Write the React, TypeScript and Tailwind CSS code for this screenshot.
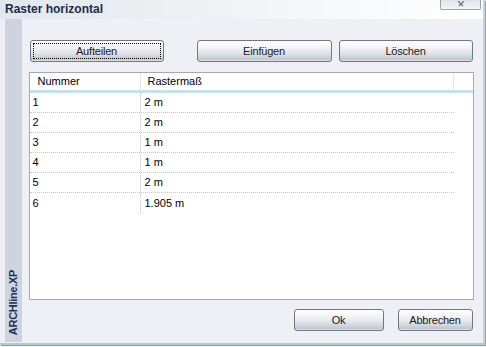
import type { ReactNode } from "react";

const rows = [
  { nr: "1", val: "2 m" },
  { nr: "2", val: "2 m" },
  { nr: "3", val: "1 m" },
  { nr: "4", val: "1 m" },
  { nr: "5", val: "2 m" },
  { nr: "6", val: "1.905 m" },
];

function XpButton({ children, className = "", focused = false }: { children: ReactNode; className?: string; focused?: boolean }) {
  return (
    <button
      className={
        "relative h-[22px] rounded-[3px] border border-[#6f7886] bg-[linear-gradient(to_bottom,#ffffff_0%,#f1f2f4_35%,#d9dde2_70%,#c2c7cf_92%,#e4e6ea_100%)] text-[11px] tracking-[-0.2px] text-[#1a1a1a] " +
        className
      }
    >
      {focused && <span className="absolute inset-[2px] border border-dotted border-black" />}
      {children}
    </button>
  );
}

export default function App() {
  return (
    <div className="h-[347px] w-[486px] overflow-hidden bg-white font-['Liberation_Sans',Arial,sans-serif]">
      <div className="flex h-[345px] w-[485px] flex-col border-b-2 border-r-2 border-b-[#a9cfc9] border-r-[#c9d3d6] bg-[#eef0f5] shadow-[1px_1px_1px_#9aa0a6]">
        {/* title bar */}
        <div className="flex h-[19px] items-start justify-between bg-[linear-gradient(to_right,#e1e7ec,#f4f6f8_60%,#ffffff)] pl-[5px] pr-[2px]">
          <span className="pt-[2px] text-[12px] font-bold leading-[14px] text-[#1c2b4a]">Raster horizontal</span>
          <div className="flex h-[10px] w-[41px] items-end justify-center rounded-b-[2px] border border-t-0 border-[#9aa3ad] bg-[linear-gradient(to_bottom,#dfe3e8,#f3f5f7)]">
            <svg width="10" height="7" viewBox="0 0 10 7" className="mb-[1px]">
              <path d="M2 0 L7 5 M8 0 L3 5" stroke="#6b7480" strokeWidth="1.2" fill="none" />
            </svg>
          </div>
        </div>

        <div className="flex flex-1 pb-[1px] pl-[5px]">
          {/* sidebar */}
          <div className="flex w-[17px] items-end justify-center bg-[#cdd4df] pb-[7px]">
            <span className="rotate-180 text-[11px] font-bold tracking-[-0.3px] text-[#1e2f5c] [writing-mode:vertical-rl]">
              ARCHline.XP
            </span>
          </div>

          <div className="flex flex-1 flex-col pl-[7px] pr-[11px] pt-[21px]">
            <div className="flex pl-[1px]">
              <XpButton focused className="w-[134px]">Aufteilen</XpButton>
              <XpButton className="ml-[33px] w-[135px]">Einfügen</XpButton>
              <XpButton className="ml-[7px] w-[134px]">Löschen</XpButton>
            </div>

            {/* list */}
            <div className="mt-[10px] h-[228px] w-[445px] border border-[#a3a8b8] bg-white">
              <div className="flex h-[20px] border-b-[3px] border-[#c5e1ee] text-[11px] text-black">
                <div className="flex w-[111px] items-center border-r border-[#e3e4e6] pl-[8px]">Nummer</div>
                <div className="flex w-[313px] items-center border-r border-[#e3e4e6] pl-[7px]">Rastermaß</div>
                <div className="flex-1" />
              </div>
              {rows.map((r, i) => (
                <div
                  key={r.nr}
                  className={
                    "flex h-[20px] w-[424px] text-[11px] text-black " +
                    (i < rows.length - 1 ? "border-b border-dotted border-[#c4c6c9]" : "")
                  }
                >
                  <div className="flex w-[111px] items-center border-r border-dotted border-[#c4c6c9] pl-[3px]">{r.nr}</div>
                  <div className="flex flex-1 items-center pl-[4px]">{r.val}</div>
                </div>
              ))}
            </div>

            <div className="mt-[9px] flex justify-end pr-[1px]">
              <XpButton className="w-[90px]">Ok</XpButton>
              <XpButton className="ml-[14px] w-[75px]">Abbrechen</XpButton>
            </div>
          </div>
        </div>
      </div>
    </div>
  );
}
